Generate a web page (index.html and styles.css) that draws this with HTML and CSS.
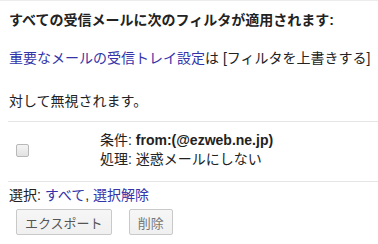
FILE: index.html
```html
<!DOCTYPE html>
<html>
<head>
<meta charset="utf-8">
<link rel="stylesheet" href="styles.css">
</head>
<body>
<div class="panel">
  <div class="title">すべての受信メールに次のフィルタが適用されます:</div>
  <div class="note"><a class="link" href="#">重要なメールの受信トレイ設定</a>は [フィルタを上書きする]</div>
  <div class="note2">対して無視されます。</div>
  <div class="row">
    <div class="check-cell"><span class="checkbox"></span></div>
    <div class="rule">
      <div>条件: <b class="crit">from:(@ezweb.ne.jp)</b></div>
      <div>処理: 迷惑メールにしない</div>
    </div>
  </div>
  <div class="select">選択: <a class="link" href="#">すべて</a>, <a class="link" href="#">選択解除</a></div>
  <div class="actions">
    <button class="btn">エクスポート</button>
    <button class="btn muted">削除</button>
  </div>
</div>
</body>
</html>
```

FILE: styles.css
```css
html, body {
  margin: 0;
  padding: 0;
  background: #fff;
}
body {
  font-family: "Liberation Sans", Arial, "Noto Sans CJK JP", sans-serif;
  font-size: 14px;
  color: #222;
  width: 378px;
  height: 244px;
  overflow: hidden;
}
.panel {
  border-top: 1px solid #ececec;
}
.title {
  font-weight: bold;
  line-height: 20px;
  margin-top: 9px;
  padding-left: 9px;
}
.note {
  line-height: 20px;
  margin-top: 18px;
  padding-left: 9px;
  white-space: nowrap;
}
.note2 {
  line-height: 20px;
  margin-top: 23px;
  padding-left: 9px;
}
.link {
  color: #3333aa;
  text-decoration: none;
}
.row {
  margin-top: 10px;
  margin-left: 8px;
  border-top: 1px solid #e5e5e5;
  border-bottom: 1px solid #e5e5e5;
  display: flex;
  align-items: center;
  padding: 9px 0 12px 0;
}
.check-cell {
  width: 92px;
  padding-left: 8px;
  box-sizing: border-box;
  display: flex;
  align-items: center;
}
.checkbox {
  display: block;
  width: 11px;
  height: 11px;
  border: 1px solid #b8b8b8;
  border-radius: 2px;
  background: linear-gradient(#f4f4f4, #e2e2e2);
}
.rule {
  line-height: 19px;
}
.crit {
  font-weight: bold;
}
.select {
  line-height: 20px;
  margin-top: 3px;
  padding-left: 9px;
}
.actions {
  display: flex;
  gap: 17px;
  margin-top: 4px;
  padding-left: 16px;
}
.btn {
  font-family: "Liberation Sans", Arial, "Noto Sans CJK JP", sans-serif;
  font-size: 13px;
  height: 26px;
  padding: 0 8px;
  border: 1px solid #c9c9c9;
  border-radius: 2px;
  background: linear-gradient(#f6f6f6, #f0f0f0);
  color: #555;
  margin: 0;
}
.btn.muted {
  color: #777;
}
```
